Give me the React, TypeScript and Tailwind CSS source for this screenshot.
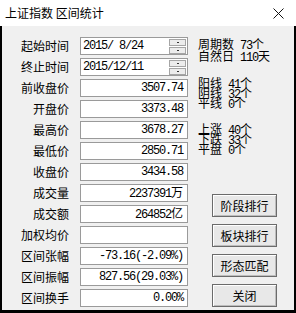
import React from "react";

const cjk = { fontFamily: '"Noto Sans CJK SC", "Liberation Sans", sans-serif' };
const mono = { fontFamily: '"Liberation Mono", "Noto Sans CJK SC", monospace' };

const rows: { label: string; value?: string; unit?: string; spin?: boolean }[] = [
  { label: "起始时间", value: "2015/ 8/24", spin: true },
  { label: "终止时间", value: "2015/12/11", spin: true },
  { label: "前收盘价", value: "3507.74" },
  { label: "开盘价", value: "3373.48" },
  { label: "最高价", value: "3678.27" },
  { label: "最低价", value: "2850.71" },
  { label: "收盘价", value: "3434.58" },
  { label: "成交量", value: "2237391", unit: "万" },
  { label: "成交额", value: "264852", unit: "亿" },
  { label: "加权均价", value: "" },
  { label: "区间张幅", value: "-73.16(-2.09%)" },
  { label: "区间振幅", value: "827.56(29.03%)" },
  { label: "区间换手", value: "0.00%" },
];

const SpinBtn = () => (
  <div className="w-[17px] h-[7px] border border-[#a5a5a5] bg-[#ececec] flex items-center justify-center">
    <div className="w-[2px] h-[1px] bg-[#333]" />
  </div>
);

const Stat = ({ name, val, h }: { name: string; val: string; h: string }) => (
  <div className={`flex items-baseline whitespace-nowrap leading-[12px] ${h}`}>
    <span style={cjk} className="text-[12px]">{name}</span>
    <span className="ml-[6px] text-[12px] tracking-[-1.2px]" style={mono}>
      {val.slice(0, -1)}
    </span>
    <span style={cjk} className="text-[12px]">{val.slice(-1)}</span>
  </div>
);

const Btn = ({ text }: { text: string }) => (
  <div
    className="w-[65px] h-[23px] border border-[#6b6b6b] bg-[#e8e8e8] shadow-[inset_1px_1px_0_#ffffff,inset_-1px_-1px_0_#bdbdbd] flex items-center justify-center text-[12px] text-black"
    style={cjk}
  >
    {text}
  </div>
);

export default function App() {
  return (
    <div className="w-[296px] h-[313px] flex flex-col bg-white">
      <div className="h-[26px] shrink-0 flex items-center justify-between pl-[5px] pr-[12px] bg-white">
        <span className="text-[12px] text-black" style={cjk}>
          上证指数 区间统计
        </span>
        <svg width="11" height="11" viewBox="0 0 11 11">
          <path d="M0.5 0.5 L10.5 10.5 M10.5 0.5 L0.5 10.5" stroke="#111" strokeWidth="1" />
        </svg>
      </div>
      <div className="flex-1 bg-[#f0f0f0] border-x-2 border-b-[3px] border-black flex pt-[11px]">
        <div className="flex flex-col gap-[3px]">
          {rows.map((r) => (
            <div key={r.label} className="flex items-center h-[18px]">
              <div className="w-[67px] text-right text-[12px] text-black" style={cjk}>
                {r.label}
              </div>
              <div
                className={`ml-[11px] w-[108px] h-[18px] border border-[#9a9a9a] bg-white flex items-center ${
                  r.spin ? "pl-[2px] pr-[1px] justify-between" : "justify-end pr-[4px]"
                }`}
              >
                <span className="text-[12px] tracking-[-1.2px] text-black whitespace-pre" style={mono}>
                  {r.value}
                  {r.unit && (
                    <span className="text-[12px] tracking-normal" style={cjk}>
                      {r.unit}
                    </span>
                  )}
                </span>
                {r.spin && (
                  <div className="flex flex-col gap-[1px]">
                    <SpinBtn />
                    <SpinBtn />
                  </div>
                )}
              </div>
            </div>
          ))}
        </div>
        <div className="ml-[10px] flex flex-col text-black">
          <div className="pt-[1px]">
            <Stat name="周期数" val="73个" h="h-[12px]" />
            <Stat name="自然日" val="110天" h="h-[12px]" />
          </div>
          <div className="mt-[15px]">
            <Stat name="阳线" val="41个" h="h-[10px]" />
            <Stat name="阴线" val="32个" h="h-[10px]" />
            <Stat name="平线" val="0个" h="h-[10px]" />
          </div>
          <div className="mt-[16px]">
            <Stat name="上涨" val="40个" h="h-[10px]" />
            <Stat name="下跌" val="33个" h="h-[10px]" />
            <Stat name="平盘" val="0个" h="h-[10px]" />
          </div>
          <div className="ml-[14px] mt-[41px] flex flex-col gap-[7px]">
            <Btn text="阶段排行" />
            <Btn text="板块排行" />
            <Btn text="形态匹配" />
            <Btn text="关闭" />
          </div>
        </div>
      </div>
    </div>
  );
}
